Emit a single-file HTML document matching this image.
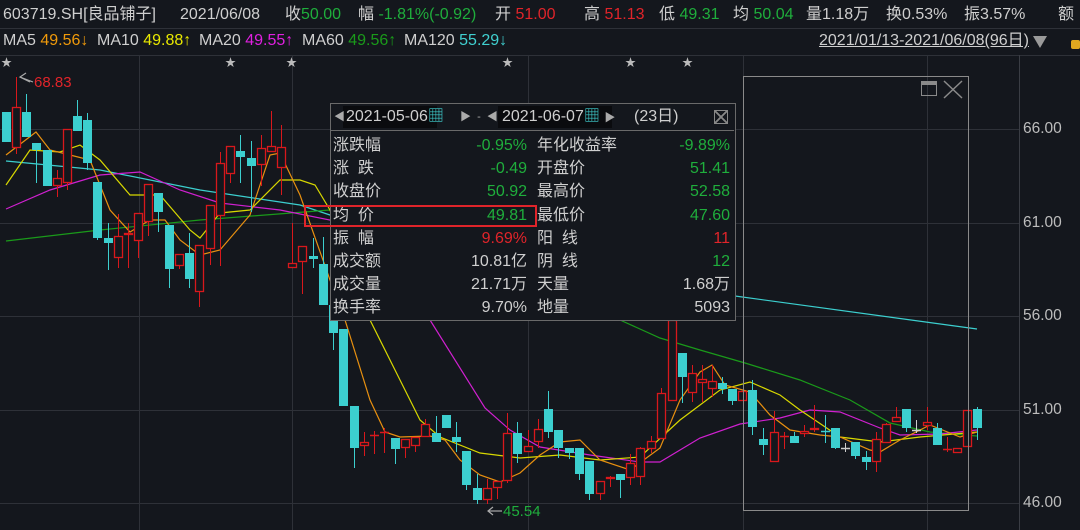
<!DOCTYPE html>
<html><head><meta charset="utf-8"><style>
body{margin:0;background:#14171d;width:1080px;height:530px;overflow:hidden;position:relative;font-family:"Liberation Sans","Noto Sans CJK SC",sans-serif;}
.t{position:absolute;font-size:16px;line-height:18px;color:#cfcfcf;white-space:nowrap}
.p{position:absolute;font-size:16px;line-height:20px;color:#cfcfcf;white-space:nowrap}
div .g,.p.g{color:#1fae3c}div .r,.p.r{color:#e0242a}.o{color:#f09a0a}.y{color:#e8e800}.m{color:#e020e0}.dg{color:#1a9a1a}div .c,.p .c{color:#40d0d0}
.ax{position:absolute;left:1023px;font-size:15.5px;color:#bdbdbd}
</style></head><body>
<svg width="1080" height="530" style="position:absolute;left:0;top:0" id="s">
<g stroke="#2e3138" stroke-width="1">
<line x1="0" y1="28.5" x2="1080" y2="28.5"/><line x1="0" y1="55.5" x2="1080" y2="55.5"/>
<line x1="0" y1="129.5" x2="1019" y2="129.5"/><line x1="0" y1="223.5" x2="1019" y2="223.5"/><line x1="0" y1="316.5" x2="1019" y2="316.5"/><line x1="0" y1="410.5" x2="1019" y2="410.5"/><line x1="0" y1="503.5" x2="1019" y2="503.5"/>
<line x1="139.5" y1="55" x2="139.5" y2="530"/><line x1="292.5" y1="55" x2="292.5" y2="530"/><line x1="528.5" y1="55" x2="528.5" y2="530"/><line x1="743.5" y1="55" x2="743.5" y2="530"/><line x1="927.5" y1="55" x2="927.5" y2="530"/>
</g>
<line x1="1019.5" y1="55" x2="1019.5" y2="530" stroke="#3a3d44"/>
<g id="ma" fill="none" stroke-width="1.2"></g>
<g id="cd"></g>
</svg>
<div class="t" style="left:3px;top:6px">603719.SH[良品铺子]</div>
<div class="t" style="left:180px;top:6px">2021/06/08</div>
<div class="t" style="left:285px;top:6px">收<span class="g">50.00</span></div>
<div class="t" style="left:358px;top:6px">幅 <span class="g">-1.81%(-0.92)</span></div>
<div class="t" style="left:495px;top:6px">开 <span class="r">51.00</span></div>
<div class="t" style="left:584px;top:6px">高 <span class="r">51.13</span></div>
<div class="t" style="left:659px;top:6px">低 <span class="g">49.31</span></div>
<div class="t" style="left:733px;top:6px">均 <span class="g">50.04</span></div>
<div class="t" style="left:806px;top:6px">量1.18万</div>
<div class="t" style="left:886px;top:6px">换0.53%</div>
<div class="t" style="left:964px;top:6px">振3.57%</div>
<div class="t" style="left:1058px;top:6px">额</div>
<div class="t" style="left:3px;top:32px">MA5 <span class="o">49.56↓</span></div>
<div class="t" style="left:97px;top:32px">MA10 <span class="y">49.88↑</span></div>
<div class="t" style="left:199px;top:32px">MA20 <span class="m">49.55↑</span></div>
<div class="t" style="left:302px;top:32px">MA60 <span class="dg">49.56↑</span></div>
<div class="t" style="left:404px;top:32px">MA120 <span class="c">55.29↓</span></div>
<div class="t" style="left:819px;top:32px;text-decoration:underline">2021/01/13-2021/06/08(96日)</div>
<div style="position:absolute;left:1033px;top:36px;width:0;height:0;border-left:7px solid transparent;border-right:7px solid transparent;border-top:12px solid #9a9a9a"></div>
<div style="position:absolute;left:1071px;top:40px;width:9px;height:9px;background:#e0a820;border-radius:2px"></div>
<div class="ax" style="top:120px">66.00</div><div class="ax" style="top:214px">61.00</div><div class="ax" style="top:307px">56.00</div><div class="ax" style="top:401px">51.00</div><div class="ax" style="top:494px">46.00</div>
<div style="position:absolute;left:34px;top:74px;color:#e0242a;font-size:15px">68.83</div>
<div style="position:absolute;left:503px;top:503px;color:#1fae3c;font-size:15px">45.54</div>
<div style="position:absolute;left:743px;top:76px;width:224px;height:433px;border:1.5px solid #8a8a8a"></div>
<div style="position:absolute;left:921px;top:81px;width:16px;height:15px;border:1.5px solid #8a8a8a;box-sizing:border-box;border-top-width:4px"></div>
<div style="position:absolute;left:330px;top:103px;width:404px;height:216px;border:1px solid #6a6a6a;background:#14171d"></div>
<div style="position:absolute;left:331px;top:130px;width:403px;height:1px;background:#6a6a6a"></div>
<div style="position:absolute;left:343px;top:106px;width:94px;height:22px;background:#0a0b0e"></div>
<div style="position:absolute;left:498px;top:106px;width:114px;height:22px;background:#0a0b0e"></div>
<div class="p" style="left:334px;top:107px;font-size:11px;color:#aaa">◀</div>
<div class="p" style="left:346px;top:107px">2021-05-06<span class="c">▦</span></div>
<div class="p" style="left:460px;top:107px;font-size:11px;color:#aaa">▶ &nbsp;-&nbsp; ◀</div>
<div class="p" style="left:502px;top:107px">2021-06-07<span class="c">▦</span> <span style="font-size:11px;color:#aaa">▶</span></div>
<div class="p" style="left:634px;top:107px">(23日)</div>
<div style="position:absolute;left:714px;top:110px;width:14px;height:14px;border:1px solid #888;box-sizing:border-box;background:linear-gradient(45deg,transparent 45%,#888 45%,#888 55%,transparent 55%),linear-gradient(-45deg,transparent 45%,#888 45%,#888 55%,transparent 55%)"></div>
<div id="rows"></div>
<div style="position:absolute;left:304px;top:205px;width:233px;height:22px;border:2px solid #e0242a;box-sizing:border-box"></div>
<script>
var L=[["涨跌幅","-0.95%","g","年化收益率","-9.89%","g"],["涨  跌","-0.49","g","开盘价","51.41","g"],["收盘价","50.92","g","最高价","52.58","g"],["均  价","49.81","g","最低价","47.60","g"],["振  幅","9.69%","r","阳  线","11","r"],["成交额","10.81亿","","阴  线","12","g"],["成交量","21.71万","","天量","1.68万",""],["换手率","9.70%","","地量","5093",""]];
var h="";L.forEach(function(r,i){var y=136+i*23.2;h+='<div class="p" style="left:333px;top:'+y+'px;white-space:pre">'+r[0]+'</div><div class="p '+r[2]+'" style="right:553px;top:'+y+'px">'+r[1]+'</div><div class="p" style="left:537px;top:'+y+'px;white-space:pre">'+r[3]+'</div><div class="p '+r[5]+'" style="right:350px;top:'+y+'px">'+r[4]+'</div>';});
document.getElementById("rows").innerHTML=h;
var C=[[6,'c',112,142,0,0],[16,'r',107,148,77,154],[26,'c',112,137,94,0],[36,'c',143,150,0,183],[47,'c',150,186,0,0],[57,'r',178,186,170,197],[67,'r',129,183,0,190],[77,'c',116,131,100,0],[87,'c',120,163,113,170],[97,'c',182,238,0,240],[108,'c',238,243,223,270],[118,'r',236,258,214,268],[128,'r',233,235,223,268],[138,'r',213,241,0,258],[148,'r',184,222,0,236],[158,'c',193,212,0,232],[169,'c',225,269,0,288],[179,'r',254,266,0,269],[189,'c',253,279,233,288],[199,'r',245,292,0,307],[210,'r',205,249,0,265],[220,'r',163,216,152,266],[230,'r',146,174,0,183],[240,'c',151,157,135,183],[251,'c',158,166,141,212],[261,'r',148,165,135,186],[271,'r',146,152,111,0],[281,'r',147,168,125,195],[292,'r',263,268,223,0],[302,'r',246,262,0,294],[313,'c',256,259,238,268],[323,'c',264,305,237,0],[333,'c',305,333,0,350],[343,'c',329,406,0,0],[354,'c',406,448,0,468],[364,'r',442,446,432,456],[374,'r',435,436,431,454],[384,'r',432,433,428,453],[395,'c',438,449,0,464],[405,'r',439,448,0,458],[415,'r',437,446,0,452],[425,'r',424,437,419,0],[436,'c',433,442,416,0],[446,'c',415,428,0,0],[456,'c',437,442,422,452],[466,'c',451,485,0,490],[477,'c',488,500,474,504],[487,'r',488,500,479,504],[497,'r',481,488,0,499],[507,'r',433,481,413,483],[517,'c',433,454,422,463],[528,'r',446,452,430,0],[538,'r',429,442,419,448],[548,'c',409,432,391,438],[558,'c',430,448,0,458],[569,'c',448,453,0,459],[579,'c',448,474,0,480],[589,'c',461,494,0,500],[600,'r',481,494,0,500],[610,'r',477,479,476,487],[620,'c',474,480,0,498],[630,'r',463,478,454,485],[640,'r',448,477,447,485],[651,'r',441,449,436,453],[661,'r',393,439,388,0],[672,'r',320,401,300,0],[682,'c',353,377,0,403],[692,'r',373,393,365,402],[702,'r',379,383,365,402],[712,'r',381,389,365,397],[722,'c',383,389,377,394],[732,'c',389,401,0,405],[742,'r',391,401,0,0],[752,'c',390,427,380,435],[763,'c',439,445,428,455],[774,'r',432,462,411,0],[784,'r',436,437,432,449],[794,'c',436,443,432,443],[804,'r',431,434,425,437],[814,'r',428,430,405,432],[825,'c',431,432,415,443],[835,'c',428,448,0,449],[845,'w',448,449,443,452],[855,'c',442,456,0,459],[866,'c',457,462,451,470],[876,'r',439,462,432,472],[886,'r',424,443,423,0],[896,'r',417,422,407,0],[906,'c',409,428,0,432],[916,'w',430,431,420,433],[927,'r',422,426,407,430],[937,'c',428,445,423,0],[947,'r',449,450,437,452],[957,'r',448,453,0,0],[967,'r',410,447,0,0],[977,'c',409,428,407,440]];
var s="";C.forEach(function(d){var x=d[0],col=d[1]=='r'?'#d8181c':d[1]=='w'?'#cccccc':'#3ccfcf',t=d[2],b=d[3],hi=d[4]||t,lo=d[5]||b;
s+='<line x1="'+(x+.5)+'" y1="'+hi+'" x2="'+(x+.5)+'" y2="'+lo+'" stroke="'+col+'" stroke-width="1"/>';
if(b-t<2){s+='<line x1="'+(x-4)+'" y1="'+t+'.5" x2="'+(x+5)+'" y2="'+t+'.5" stroke="'+col+'" stroke-width="1.5"/>';}
else if(d[1]=='r'){s+='<rect x="'+(x-3.5)+'" y="'+(t+.5)+'" width="8" height="'+(b-t-1)+'" fill="#14171d" stroke="'+col+'" stroke-width="1.3"/>';}
else s+='<rect x="'+(x-4)+'" y="'+t+'" width="9" height="'+(b-t)+'" fill="'+col+'"/>';});
document.getElementById("cd").innerHTML=s;
function pl(c,p){return '<polyline stroke="'+c+'" points="'+p+'"/>';}
var m="";
m+=pl('#3ccfcf','6,161 100,170 200,190 300,205 330,215 735,296 977,329');
m+=pl('#1a9a1a','6,241 100,230 200,220 330,210 620,320 660,338 700,350 745,363 800,380 850,400 890,423 930,432 977,436');
m+=pl('#d020d0','6,209 50,190 100,175 140,172 180,190 220,203 280,210 330,220 430,320 485,408 510,430 540,447 590,455 640,462 660,462 700,438 740,424 780,418 810,410 840,412 880,428 900,435 940,434 977,430');
m+=pl('#d8d800','6,185 30,150 60,152 80,145 100,160 130,195 160,195 190,230 200,238 220,213 250,210 280,180 300,180 315,185 330,210 370,320 400,380 420,420 440,437 480,453 520,458 560,455 600,460 640,457 680,420 720,390 750,382 780,395 800,410 840,437 880,442 920,437 977,432');
m+=pl('#e89010','6,155 36,132 50,150 70,155 90,160 110,210 130,232 150,220 165,220 180,240 200,255 220,250 250,215 270,155 280,153 300,195 330,280 345,320 370,400 385,432 400,437 430,436 445,440 460,460 480,475 500,482 520,473 540,455 560,442 580,440 600,460 630,470 660,448 680,400 700,372 712,365 725,385 750,392 770,415 790,430 820,435 840,437 870,450 880,452 900,440 930,425 960,437 977,432');
m+='<polyline stroke="#aaa" points="30,82 20,77 26,73"/><line x1="20" y1="77" x2="33" y2="82" stroke="#aaa"/>';
m+='<line x1="488" y1="511" x2="502" y2="511" stroke="#aaa"/><polyline stroke="#aaa" points="493,507 488,511 493,515"/>';
m+='<line x1="944" y1="81" x2="962" y2="98" stroke="#8a8a8a" stroke-width="1.5"/><line x1="962" y1="81" x2="944" y2="98" stroke="#8a8a8a" stroke-width="1.5"/>';
[6,230,291,507,630,687].forEach(function(x){m+='<text x="'+(x-5)+'" y="66" fill="#bbb" font-size="11" stroke="none">★</text>';});
document.getElementById("ma").innerHTML=m;
</script>
</body></html>
